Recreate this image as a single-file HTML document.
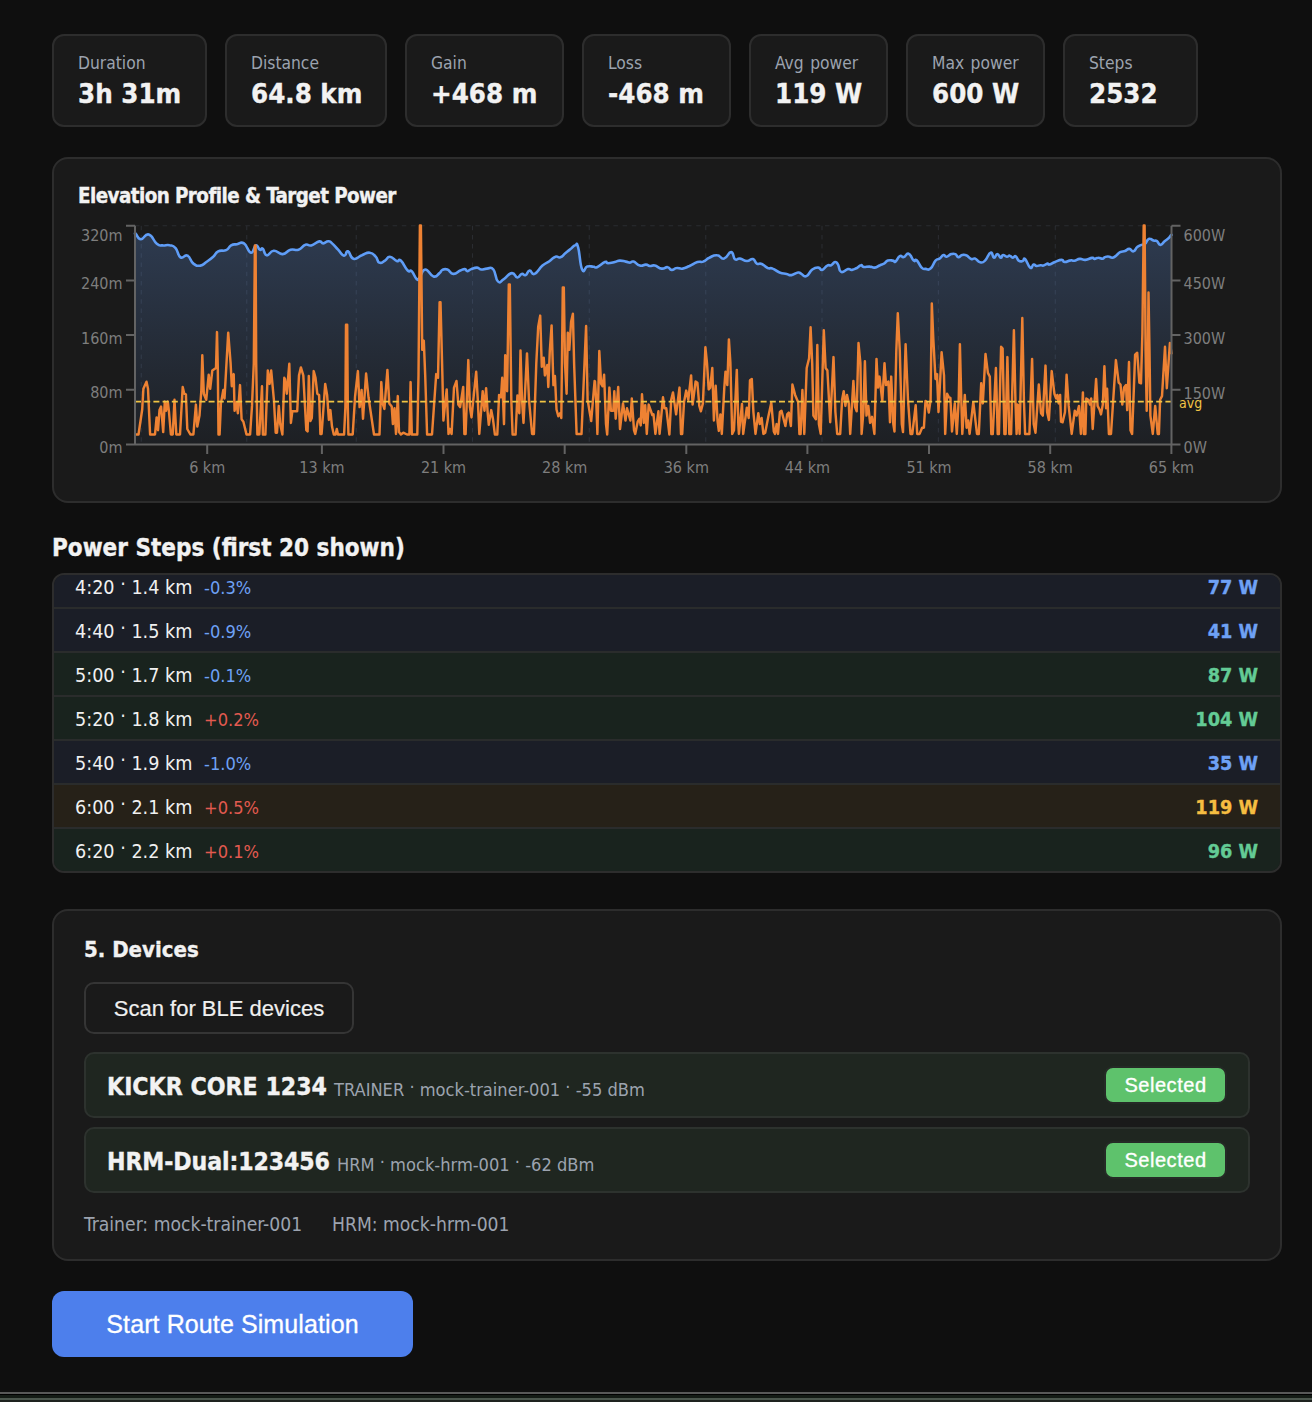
<!DOCTYPE html>
<html lang="en">
<head>
<meta charset="utf-8">
<title>Route Simulation</title>
<style>
*{box-sizing:border-box;margin:0;padding:0}
html,body{width:1312px;height:1402px;overflow:hidden;background:#0f0f0f}
body{position:relative;font-family:"DejaVu Sans Condensed","Liberation Sans",sans-serif;color:#f0f0f0}
.abs{position:absolute}
.card{position:absolute;top:34px;height:93px;background:#1a1a1a;border:2px solid #2d2d2d;border-radius:12px}
.card .l{position:absolute;left:24px;top:17px;font-size:17.3px;word-spacing:1.5px;line-height:20px;color:#9ca3af;white-space:nowrap}
.card .v{position:absolute;left:24px;top:42.3px;font-size:27.4px;line-height:32px;font-weight:bold;color:#f2f2f2;white-space:nowrap}
.panel{position:absolute;left:52px;width:1230px;background:#1a1a1a;border:2px solid #2d2d2d;border-radius:16px}
#chart{top:157px;height:346px}
#chart h3{position:absolute;left:24px;top:25px;font-size:20.4px;letter-spacing:-.57px;line-height:24px;font-weight:bold;color:#f2f2f2;white-space:nowrap}
h2{position:absolute;left:52px;top:533px;font-size:24px;line-height:30px;font-weight:bold;color:#f2f2f2;white-space:nowrap}
#steps{position:absolute;left:52px;top:573px;width:1230px;height:300px;border:2px solid #2d2d2d;border-radius:12px;overflow:hidden;background:#1a1a1a}
.row{position:absolute;left:0;width:1226px;height:44px;border-bottom:2px solid #2a2c2c}
.row .t{position:absolute;left:21px;top:10.5px;font-size:19.6px;line-height:24px;color:#f0f0f0;white-space:nowrap}
.row .g{position:absolute;left:150px;top:11px;font-size:18.1px;line-height:24px;white-space:nowrap}
.row .w{position:absolute;right:22px;top:10.5px;font-size:19.7px;line-height:24px;font-weight:bold;white-space:nowrap}
.row .t i,.drow i{font-style:normal;position:relative;top:-2.5px}
.card .v,h2,h3,.drow b,.row .w{-webkit-text-stroke:.35px currentColor}
.blue{background:#1b1e27}.green{background:#19231e}.amber{background:#262118}
.cb{color:#6ea1f5}.cr{color:#e25a50}.cg{color:#63cb95}.cy{color:#f5bd41}
#dev{top:909px;height:352px}
#dev h3{position:absolute;left:30px;top:25px;font-size:22px;line-height:28px;font-weight:bold;color:#f2f2f2;white-space:nowrap}
#scan{-webkit-text-stroke:.2px #f0f0f0;position:absolute;left:30px;top:71px;width:270px;height:52px;border:2px solid #353535;border-radius:10px;background:#1a1a1a;font-family:"Liberation Sans",sans-serif;font-size:22px;line-height:50px;text-align:center;color:#f0f0f0}
.drow{position:absolute;left:30px;width:1166px;height:66px;border:2px solid #2d322e;border-radius:10px;background:#1f2620}
.drow b{position:absolute;left:21px;top:17.7px;font-size:24.6px;line-height:30px;color:#f2f2f2;white-space:nowrap}
.drow span.m{position:absolute;top:23.5px;font-size:18.1px;line-height:24px;color:#9ca3af;white-space:nowrap}
.badge{position:absolute;right:21px;top:12px;width:123px;height:38px;-webkit-text-stroke:.35px #fff;border:2px solid #252a26;border-radius:9px;background:#5ec26c;font-family:"Liberation Sans",sans-serif;font-size:20px;line-height:35px;text-align:center;color:#fff;letter-spacing:.55px}
.sel{position:absolute;top:302px;font-size:19.15px;line-height:24px;color:#9ca3af;white-space:nowrap}
#start{-webkit-text-stroke:.3px #fff;position:absolute;left:52px;top:1291px;width:361px;height:66px;border-radius:12px;background:#4d7fec;font-family:"Liberation Sans",sans-serif;font-size:25px;line-height:66px;text-align:center;color:#fff;letter-spacing:.1px}
#strip{position:absolute;left:0;top:1392px;width:1312px;height:10px;background:linear-gradient(#585858 0,#585858 2px,#000 2px,#000 3px,#141b15 3px,#141b15 6px,#4b564d 6px,#4b564d 8px,#1e231f 8px)}
</style>
</head>
<body>
<div class="card" style="left:52px;width:155px"><div class="l">Duration</div><div class="v">3h 31m</div></div>
<div class="card" style="left:225px;width:162px"><div class="l">Distance</div><div class="v">64.8 km</div></div>
<div class="card" style="left:405px;width:159px"><div class="l">Gain</div><div class="v">+468 m</div></div>
<div class="card" style="left:582px;width:149px"><div class="l">Loss</div><div class="v">-468 m</div></div>
<div class="card" style="left:749px;width:139px"><div class="l">Avg power</div><div class="v">119 W</div></div>
<div class="card" style="left:906px;width:139px"><div class="l">Max power</div><div class="v">600 W</div></div>
<div class="card" style="left:1063px;width:135px"><div class="l">Steps</div><div class="v">2532</div></div>

<div class="panel" id="chart">
<h3>Elevation Profile &amp; Target Power</h3>

</div>

<svg id="cv" viewBox="0 150 1312 360" width="1312" height="360" style="position:absolute;left:0;top:150px" font-family="'DejaVu Sans Condensed','Liberation Sans',sans-serif" font-size="16">
<defs><linearGradient id="eg" x1="0" y1="225" x2="0" y2="445" gradientUnits="userSpaceOnUse"><stop offset="0" stop-color="#6496e6" stop-opacity="0.27"/><stop offset="1" stop-color="#6496e6" stop-opacity="0.045"/></linearGradient></defs>
<path d="M141.25,225.7 V444.5 M246.75,225.7 V444.5 M356.25,225.7 V444.5 M472.5,225.7 V444.5 M589.25,225.7 V444.5 M705.75,225.7 V444.5 M822,225.7 V444.5 M938.4,225.7 V444.5 M1055.3,225.7 V444.5 M135.0,225.7 H1171.5" stroke="#2a2c31" stroke-width="1.1" stroke-dasharray="4.5 4.7" fill="none"/>
<path d="M135.0,444.5 L135.0,233.6 C135.3,233.7 134.4,232.4 135.9,233.9 C137.5,235.4 137.5,239.1 140.9,239.2 C144.3,239.4 144.6,233.3 148.8,234.5 C153.1,235.7 153.1,240.9 156.8,243.8 C160.5,246.7 159.3,245.0 162.7,245.4 C166.1,245.7 166.2,244.4 169.6,245.2 C173.1,245.9 172.7,244.9 175.6,248.1 C178.5,251.4 177.4,255.2 180.5,257.3 C183.7,259.3 184.0,254.0 187.5,255.7 C190.9,257.4 190.0,261.0 193.4,263.6 C196.9,266.2 196.9,266.0 200.4,265.6 C203.8,265.2 202.9,264.4 206.3,262.0 C209.7,259.6 210.1,259.5 213.2,256.7 C216.4,253.8 214.8,253.1 218.2,251.3 C221.6,249.6 222.7,251.7 226.1,250.1 C229.6,248.5 228.2,247.0 231.1,245.4 C234.0,243.8 233.6,244.7 237.0,244.2 C240.5,243.6 240.3,241.1 244.0,243.4 C247.7,245.7 247.7,252.2 250.9,252.7 C254.1,253.2 253.5,246.2 255.8,245.4 C258.2,244.6 258.0,248.8 259.8,249.7 C261.7,250.6 260.9,247.3 262.8,248.7 C264.6,250.2 263.8,254.7 266.7,255.3 C269.6,255.8 269.5,251.0 273.7,250.7 C277.9,250.4 278.1,254.4 282.6,254.1 C287.1,253.8 286.3,250.9 290.5,249.7 C294.8,248.6 294.5,251.0 298.5,249.7 C302.4,248.4 302.0,245.9 305.4,244.8 C308.8,243.6 307.6,246.3 311.3,245.4 C315.0,244.5 316.1,241.9 319.3,241.4 C322.4,240.9 320.8,243.4 323.2,243.4 C325.6,243.3 325.8,241.2 328.2,241.2 C330.6,241.2 329.5,241.1 332.1,243.4 C334.8,245.7 334.9,246.4 338.1,249.7 C341.3,253.0 341.4,255.2 344.0,255.7 C346.7,256.1 345.5,250.5 348.0,251.3 C350.5,252.2 349.8,257.8 353.5,258.8 C357.2,259.9 357.5,256.9 361.9,255.3 C366.2,253.6 366.1,252.3 369.8,252.7 C373.5,253.1 373.2,254.0 375.7,256.7 C378.3,259.3 376.8,261.6 379.3,262.6 C381.8,263.7 382.1,262.2 385.0,260.6 C387.8,259.0 386.7,256.6 389.9,256.7 C393.1,256.8 393.9,260.0 396.8,261.0 C399.8,262.1 397.9,258.1 400.8,260.6 C403.7,263.2 404.8,267.7 407.7,270.5 C410.7,273.3 409.3,268.9 411.7,271.1 C414.1,273.4 414.5,277.4 416.7,279.1 C418.8,280.7 417.4,280.0 419.6,277.5 C421.9,274.9 421.5,269.8 425.2,269.5 C428.9,269.3 429.7,275.5 433.5,276.5 C437.3,277.4 437.1,274.9 439.5,273.1 C441.8,271.4 440.3,270.9 442.4,269.9 C444.5,269.0 444.5,268.5 447.4,269.5 C450.3,270.6 449.9,273.6 453.3,273.9 C456.8,274.2 457.2,271.8 460.3,270.5 C463.3,269.3 463.0,269.0 464.8,269.1 C466.7,269.3 465.5,271.1 467.2,271.1 C468.9,271.1 468.5,270.1 471.2,269.1 C473.8,268.2 474.5,267.5 477.1,267.6 C479.7,267.7 478.4,269.3 481.1,269.5 C483.7,269.8 483.7,268.6 487.0,268.6 C490.3,268.6 490.5,266.1 493.4,269.5 C496.3,273.0 495.1,278.9 497.9,281.4 C500.7,284.0 500.2,281.3 503.9,279.1 C507.6,276.8 508.2,273.5 511.8,273.1 C515.4,272.7 514.7,277.3 517.3,277.5 C520.0,277.7 519.5,274.5 521.7,273.9 C523.9,273.3 523.5,276.0 525.7,275.1 C527.8,274.2 527.2,270.9 529.6,270.5 C532.0,270.2 531.1,275.2 534.6,273.9 C538.0,272.6 538.5,269.0 542.5,265.6 C546.5,262.2 546.0,263.6 549.4,261.2 C552.9,258.8 552.5,257.7 555.4,256.7 C558.3,255.6 557.7,258.2 560.3,257.3 C563.0,256.4 562.7,255.4 565.3,253.3 C567.9,251.2 567.6,251.5 570.2,249.3 C572.9,247.2 573.1,245.6 575.2,245.2 C577.3,244.7 576.3,241.2 578.2,247.7 C580.0,254.2 579.8,264.5 582.1,269.5 C584.5,274.6 584.2,267.4 587.1,266.6 C590.0,265.8 590.4,266.4 593.0,266.6 C595.7,266.7 593.8,268.4 597.0,267.2 C600.2,266.0 602.0,263.1 604.9,262.0 C607.8,261.0 605.3,263.2 607.9,263.2 C610.5,263.2 611.7,262.7 614.8,262.0 C618.0,261.3 616.9,260.7 619.8,260.6 C622.7,260.5 623.0,261.1 625.7,261.6 C628.5,262.1 627.9,262.6 630.0,262.6 C632.1,262.6 630.9,260.8 633.6,261.6 C636.2,262.4 636.6,264.8 639.9,265.6 C643.2,266.4 643.2,264.5 645.9,264.6 C648.5,264.7 647.4,265.7 649.8,266.0 C652.2,266.2 651.6,264.9 654.8,265.6 C657.9,266.3 658.3,268.1 661.7,268.6 C665.1,269.0 665.0,266.8 667.7,267.2 C670.3,267.5 669.2,269.7 671.6,269.9 C674.0,270.2 673.7,268.3 676.6,268.0 C679.5,267.6 679.1,269.1 682.5,268.6 C686.0,268.0 685.5,267.7 689.5,266.0 C693.4,264.2 693.7,263.2 697.4,262.0 C701.1,260.9 700.2,262.8 703.3,261.6 C706.5,260.5 705.6,259.3 709.3,257.7 C713.0,256.0 713.2,255.0 717.2,255.3 C721.2,255.5 720.4,259.5 724.1,258.6 C727.8,257.8 728.2,251.9 731.1,252.1 C734.0,252.3 732.7,257.5 735.0,259.2 C737.4,261.0 736.8,258.2 740.0,258.6 C743.2,259.1 743.5,260.9 746.9,261.0 C750.4,261.1 750.2,258.4 752.9,259.0 C755.5,259.7 754.5,262.3 756.8,263.6 C759.2,264.9 758.9,262.8 761.8,264.0 C764.7,265.2 764.8,266.7 767.7,268.0 C770.6,269.2 769.5,267.3 772.7,268.6 C775.9,269.8 775.9,271.1 779.6,272.5 C783.3,273.9 783.4,273.2 786.6,273.9 C789.7,274.6 788.4,275.5 791.5,275.1 C794.6,274.7 795.4,272.8 798.1,272.5 C800.7,272.2 799.2,273.0 801.4,273.9 C803.6,274.9 803.5,277.2 806.4,276.1 C809.3,274.9 809.2,271.8 812.3,269.5 C815.5,267.3 815.6,267.5 818.3,267.6 C820.9,267.7 819.9,270.5 822.2,269.9 C824.6,269.4 824.8,266.8 827.2,265.6 C829.6,264.3 829.0,266.1 831.1,265.2 C833.3,264.2 833.3,262.2 835.1,262.0 C837.0,261.9 836.5,261.9 838.1,264.6 C839.7,267.2 838.4,270.7 841.1,271.9 C843.7,273.1 845.1,269.7 848.0,269.1 C850.9,268.6 849.6,270.3 852.0,269.9 C854.3,269.6 854.5,269.2 856.9,268.0 C859.3,266.7 859.0,265.4 860.9,265.2 C862.7,264.9 861.5,266.6 863.8,267.0 C866.2,267.3 866.9,266.4 869.8,266.6 C872.7,266.7 872.0,267.9 874.7,267.6 C877.5,267.2 877.5,266.2 880.0,265.2 C882.5,264.1 881.8,264.8 884.0,263.6 C886.1,262.4 885.5,261.4 887.9,260.6 C890.3,259.8 890.9,260.4 892.9,260.6 C894.9,260.9 893.6,262.8 895.5,261.6 C897.3,260.4 897.6,257.3 899.8,256.1 C902.0,254.9 901.4,257.7 903.8,257.1 C906.2,256.4 906.1,252.7 908.7,253.7 C911.4,254.6 911.6,258.9 913.7,260.6 C915.8,262.4 914.5,258.4 916.7,260.2 C918.8,262.1 919.2,265.2 921.6,267.6 C924.0,269.9 923.2,268.7 925.6,268.9 C928.0,269.2 927.9,270.8 930.5,268.6 C933.2,266.3 933.1,263.3 935.5,260.6 C937.9,258.0 937.3,260.1 939.5,258.6 C941.6,257.2 941.6,255.6 943.4,255.1 C945.3,254.5 944.3,256.9 946.4,256.7 C948.5,256.4 949.0,254.8 951.3,254.1 C953.7,253.4 953.5,253.3 955.3,254.1 C957.2,254.9 956.4,256.8 958.3,257.1 C960.1,257.3 960.1,255.6 962.2,255.1 C964.4,254.6 963.8,254.2 966.2,255.3 C968.6,256.3 968.8,258.1 971.2,259.0 C973.5,259.9 972.7,257.8 975.1,258.6 C977.5,259.5 977.4,261.7 980.1,262.2 C982.7,262.7 982.2,263.2 985.0,260.6 C987.8,258.1 988.2,253.5 990.6,252.7 C993.0,251.9 992.2,257.3 994.0,257.7 C995.7,258.0 995.5,254.1 997.3,254.1 C999.2,254.1 999.4,257.4 1000.9,257.7 C1002.4,257.9 1001.3,255.3 1002.9,255.1 C1004.5,254.8 1005.0,256.5 1006.8,256.7 C1008.7,256.8 1008.2,255.4 1009.8,255.7 C1011.4,255.9 1011.2,257.5 1012.8,257.7 C1014.4,257.8 1014.2,255.5 1015.8,256.3 C1017.3,257.1 1016.9,259.4 1018.7,260.6 C1020.6,261.9 1021.0,261.4 1022.7,261.0 C1024.4,260.6 1023.1,257.3 1025.1,259.0 C1027.1,260.8 1027.9,266.1 1030.2,267.6 C1032.5,269.0 1031.9,265.0 1033.6,264.6 C1035.3,264.2 1034.7,265.8 1036.6,266.0 C1038.4,266.1 1038.7,265.3 1040.5,265.2 C1042.4,265.1 1041.6,266.0 1043.5,265.6 C1045.3,265.2 1045.9,263.9 1047.5,263.6 C1049.0,263.3 1047.5,265.0 1049.4,264.6 C1051.4,264.2 1051.6,263.2 1054.9,262.0 C1058.1,260.7 1059.0,259.9 1061.6,259.9 C1064.2,259.9 1062.2,261.8 1064.6,262.0 C1067.1,262.1 1068.1,260.7 1070.7,260.4 C1073.3,260.0 1072.0,261.1 1074.4,260.7 C1076.8,260.3 1077.0,259.1 1079.9,258.9 C1082.8,258.7 1082.1,260.1 1085.4,259.9 C1088.6,259.6 1089.6,258.2 1092.1,257.9 C1094.5,257.7 1092.9,259.0 1094.5,258.9 C1096.1,258.8 1096.1,257.7 1098.2,257.7 C1100.3,257.6 1100.7,258.8 1102.4,258.7 C1104.2,258.5 1103.3,257.7 1104.9,257.1 C1106.5,256.5 1106.6,256.3 1108.5,256.5 C1110.5,256.6 1110.2,257.8 1112.2,257.7 C1114.1,257.5 1113.7,257.3 1115.9,255.9 C1118.0,254.4 1117.7,253.5 1120.1,252.2 C1122.6,250.9 1122.6,251.9 1125.0,251.0 C1127.4,250.1 1127.0,248.8 1129.3,248.9 C1131.5,249.0 1131.4,251.9 1133.5,251.3 C1135.7,250.8 1135.1,248.7 1137.2,247.0 C1139.3,245.2 1139.3,245.8 1141.5,244.9 C1143.6,244.0 1143.5,245.0 1145.1,243.7 C1146.7,242.4 1146.3,241.3 1147.6,240.0 C1148.9,238.7 1148.4,238.6 1150.0,238.8 C1151.6,238.9 1151.9,240.1 1153.7,240.6 C1155.4,241.2 1154.9,239.7 1156.7,240.9 C1158.5,242.0 1158.3,244.8 1160.4,244.9 C1162.5,245.0 1162.4,243.1 1164.6,241.2 C1166.9,239.4 1167.2,239.6 1168.9,237.9 C1170.6,236.3 1170.3,235.9 1171.0,235.1 C1171.7,234.3 1171.4,235.0 1171.5,235.0 L1171.5,444.5 Z" fill="url(#eg)"/>
<path d="M135.0,233.6 C135.3,233.7 134.4,232.4 135.9,233.9 C137.5,235.4 137.5,239.1 140.9,239.2 C144.3,239.4 144.6,233.3 148.8,234.5 C153.1,235.7 153.1,240.9 156.8,243.8 C160.5,246.7 159.3,245.0 162.7,245.4 C166.1,245.7 166.2,244.4 169.6,245.2 C173.1,245.9 172.7,244.9 175.6,248.1 C178.5,251.4 177.4,255.2 180.5,257.3 C183.7,259.3 184.0,254.0 187.5,255.7 C190.9,257.4 190.0,261.0 193.4,263.6 C196.9,266.2 196.9,266.0 200.4,265.6 C203.8,265.2 202.9,264.4 206.3,262.0 C209.7,259.6 210.1,259.5 213.2,256.7 C216.4,253.8 214.8,253.1 218.2,251.3 C221.6,249.6 222.7,251.7 226.1,250.1 C229.6,248.5 228.2,247.0 231.1,245.4 C234.0,243.8 233.6,244.7 237.0,244.2 C240.5,243.6 240.3,241.1 244.0,243.4 C247.7,245.7 247.7,252.2 250.9,252.7 C254.1,253.2 253.5,246.2 255.8,245.4 C258.2,244.6 258.0,248.8 259.8,249.7 C261.7,250.6 260.9,247.3 262.8,248.7 C264.6,250.2 263.8,254.7 266.7,255.3 C269.6,255.8 269.5,251.0 273.7,250.7 C277.9,250.4 278.1,254.4 282.6,254.1 C287.1,253.8 286.3,250.9 290.5,249.7 C294.8,248.6 294.5,251.0 298.5,249.7 C302.4,248.4 302.0,245.9 305.4,244.8 C308.8,243.6 307.6,246.3 311.3,245.4 C315.0,244.5 316.1,241.9 319.3,241.4 C322.4,240.9 320.8,243.4 323.2,243.4 C325.6,243.3 325.8,241.2 328.2,241.2 C330.6,241.2 329.5,241.1 332.1,243.4 C334.8,245.7 334.9,246.4 338.1,249.7 C341.3,253.0 341.4,255.2 344.0,255.7 C346.7,256.1 345.5,250.5 348.0,251.3 C350.5,252.2 349.8,257.8 353.5,258.8 C357.2,259.9 357.5,256.9 361.9,255.3 C366.2,253.6 366.1,252.3 369.8,252.7 C373.5,253.1 373.2,254.0 375.7,256.7 C378.3,259.3 376.8,261.6 379.3,262.6 C381.8,263.7 382.1,262.2 385.0,260.6 C387.8,259.0 386.7,256.6 389.9,256.7 C393.1,256.8 393.9,260.0 396.8,261.0 C399.8,262.1 397.9,258.1 400.8,260.6 C403.7,263.2 404.8,267.7 407.7,270.5 C410.7,273.3 409.3,268.9 411.7,271.1 C414.1,273.4 414.5,277.4 416.7,279.1 C418.8,280.7 417.4,280.0 419.6,277.5 C421.9,274.9 421.5,269.8 425.2,269.5 C428.9,269.3 429.7,275.5 433.5,276.5 C437.3,277.4 437.1,274.9 439.5,273.1 C441.8,271.4 440.3,270.9 442.4,269.9 C444.5,269.0 444.5,268.5 447.4,269.5 C450.3,270.6 449.9,273.6 453.3,273.9 C456.8,274.2 457.2,271.8 460.3,270.5 C463.3,269.3 463.0,269.0 464.8,269.1 C466.7,269.3 465.5,271.1 467.2,271.1 C468.9,271.1 468.5,270.1 471.2,269.1 C473.8,268.2 474.5,267.5 477.1,267.6 C479.7,267.7 478.4,269.3 481.1,269.5 C483.7,269.8 483.7,268.6 487.0,268.6 C490.3,268.6 490.5,266.1 493.4,269.5 C496.3,273.0 495.1,278.9 497.9,281.4 C500.7,284.0 500.2,281.3 503.9,279.1 C507.6,276.8 508.2,273.5 511.8,273.1 C515.4,272.7 514.7,277.3 517.3,277.5 C520.0,277.7 519.5,274.5 521.7,273.9 C523.9,273.3 523.5,276.0 525.7,275.1 C527.8,274.2 527.2,270.9 529.6,270.5 C532.0,270.2 531.1,275.2 534.6,273.9 C538.0,272.6 538.5,269.0 542.5,265.6 C546.5,262.2 546.0,263.6 549.4,261.2 C552.9,258.8 552.5,257.7 555.4,256.7 C558.3,255.6 557.7,258.2 560.3,257.3 C563.0,256.4 562.7,255.4 565.3,253.3 C567.9,251.2 567.6,251.5 570.2,249.3 C572.9,247.2 573.1,245.6 575.2,245.2 C577.3,244.7 576.3,241.2 578.2,247.7 C580.0,254.2 579.8,264.5 582.1,269.5 C584.5,274.6 584.2,267.4 587.1,266.6 C590.0,265.8 590.4,266.4 593.0,266.6 C595.7,266.7 593.8,268.4 597.0,267.2 C600.2,266.0 602.0,263.1 604.9,262.0 C607.8,261.0 605.3,263.2 607.9,263.2 C610.5,263.2 611.7,262.7 614.8,262.0 C618.0,261.3 616.9,260.7 619.8,260.6 C622.7,260.5 623.0,261.1 625.7,261.6 C628.5,262.1 627.9,262.6 630.0,262.6 C632.1,262.6 630.9,260.8 633.6,261.6 C636.2,262.4 636.6,264.8 639.9,265.6 C643.2,266.4 643.2,264.5 645.9,264.6 C648.5,264.7 647.4,265.7 649.8,266.0 C652.2,266.2 651.6,264.9 654.8,265.6 C657.9,266.3 658.3,268.1 661.7,268.6 C665.1,269.0 665.0,266.8 667.7,267.2 C670.3,267.5 669.2,269.7 671.6,269.9 C674.0,270.2 673.7,268.3 676.6,268.0 C679.5,267.6 679.1,269.1 682.5,268.6 C686.0,268.0 685.5,267.7 689.5,266.0 C693.4,264.2 693.7,263.2 697.4,262.0 C701.1,260.9 700.2,262.8 703.3,261.6 C706.5,260.5 705.6,259.3 709.3,257.7 C713.0,256.0 713.2,255.0 717.2,255.3 C721.2,255.5 720.4,259.5 724.1,258.6 C727.8,257.8 728.2,251.9 731.1,252.1 C734.0,252.3 732.7,257.5 735.0,259.2 C737.4,261.0 736.8,258.2 740.0,258.6 C743.2,259.1 743.5,260.9 746.9,261.0 C750.4,261.1 750.2,258.4 752.9,259.0 C755.5,259.7 754.5,262.3 756.8,263.6 C759.2,264.9 758.9,262.8 761.8,264.0 C764.7,265.2 764.8,266.7 767.7,268.0 C770.6,269.2 769.5,267.3 772.7,268.6 C775.9,269.8 775.9,271.1 779.6,272.5 C783.3,273.9 783.4,273.2 786.6,273.9 C789.7,274.6 788.4,275.5 791.5,275.1 C794.6,274.7 795.4,272.8 798.1,272.5 C800.7,272.2 799.2,273.0 801.4,273.9 C803.6,274.9 803.5,277.2 806.4,276.1 C809.3,274.9 809.2,271.8 812.3,269.5 C815.5,267.3 815.6,267.5 818.3,267.6 C820.9,267.7 819.9,270.5 822.2,269.9 C824.6,269.4 824.8,266.8 827.2,265.6 C829.6,264.3 829.0,266.1 831.1,265.2 C833.3,264.2 833.3,262.2 835.1,262.0 C837.0,261.9 836.5,261.9 838.1,264.6 C839.7,267.2 838.4,270.7 841.1,271.9 C843.7,273.1 845.1,269.7 848.0,269.1 C850.9,268.6 849.6,270.3 852.0,269.9 C854.3,269.6 854.5,269.2 856.9,268.0 C859.3,266.7 859.0,265.4 860.9,265.2 C862.7,264.9 861.5,266.6 863.8,267.0 C866.2,267.3 866.9,266.4 869.8,266.6 C872.7,266.7 872.0,267.9 874.7,267.6 C877.5,267.2 877.5,266.2 880.0,265.2 C882.5,264.1 881.8,264.8 884.0,263.6 C886.1,262.4 885.5,261.4 887.9,260.6 C890.3,259.8 890.9,260.4 892.9,260.6 C894.9,260.9 893.6,262.8 895.5,261.6 C897.3,260.4 897.6,257.3 899.8,256.1 C902.0,254.9 901.4,257.7 903.8,257.1 C906.2,256.4 906.1,252.7 908.7,253.7 C911.4,254.6 911.6,258.9 913.7,260.6 C915.8,262.4 914.5,258.4 916.7,260.2 C918.8,262.1 919.2,265.2 921.6,267.6 C924.0,269.9 923.2,268.7 925.6,268.9 C928.0,269.2 927.9,270.8 930.5,268.6 C933.2,266.3 933.1,263.3 935.5,260.6 C937.9,258.0 937.3,260.1 939.5,258.6 C941.6,257.2 941.6,255.6 943.4,255.1 C945.3,254.5 944.3,256.9 946.4,256.7 C948.5,256.4 949.0,254.8 951.3,254.1 C953.7,253.4 953.5,253.3 955.3,254.1 C957.2,254.9 956.4,256.8 958.3,257.1 C960.1,257.3 960.1,255.6 962.2,255.1 C964.4,254.6 963.8,254.2 966.2,255.3 C968.6,256.3 968.8,258.1 971.2,259.0 C973.5,259.9 972.7,257.8 975.1,258.6 C977.5,259.5 977.4,261.7 980.1,262.2 C982.7,262.7 982.2,263.2 985.0,260.6 C987.8,258.1 988.2,253.5 990.6,252.7 C993.0,251.9 992.2,257.3 994.0,257.7 C995.7,258.0 995.5,254.1 997.3,254.1 C999.2,254.1 999.4,257.4 1000.9,257.7 C1002.4,257.9 1001.3,255.3 1002.9,255.1 C1004.5,254.8 1005.0,256.5 1006.8,256.7 C1008.7,256.8 1008.2,255.4 1009.8,255.7 C1011.4,255.9 1011.2,257.5 1012.8,257.7 C1014.4,257.8 1014.2,255.5 1015.8,256.3 C1017.3,257.1 1016.9,259.4 1018.7,260.6 C1020.6,261.9 1021.0,261.4 1022.7,261.0 C1024.4,260.6 1023.1,257.3 1025.1,259.0 C1027.1,260.8 1027.9,266.1 1030.2,267.6 C1032.5,269.0 1031.9,265.0 1033.6,264.6 C1035.3,264.2 1034.7,265.8 1036.6,266.0 C1038.4,266.1 1038.7,265.3 1040.5,265.2 C1042.4,265.1 1041.6,266.0 1043.5,265.6 C1045.3,265.2 1045.9,263.9 1047.5,263.6 C1049.0,263.3 1047.5,265.0 1049.4,264.6 C1051.4,264.2 1051.6,263.2 1054.9,262.0 C1058.1,260.7 1059.0,259.9 1061.6,259.9 C1064.2,259.9 1062.2,261.8 1064.6,262.0 C1067.1,262.1 1068.1,260.7 1070.7,260.4 C1073.3,260.0 1072.0,261.1 1074.4,260.7 C1076.8,260.3 1077.0,259.1 1079.9,258.9 C1082.8,258.7 1082.1,260.1 1085.4,259.9 C1088.6,259.6 1089.6,258.2 1092.1,257.9 C1094.5,257.7 1092.9,259.0 1094.5,258.9 C1096.1,258.8 1096.1,257.7 1098.2,257.7 C1100.3,257.6 1100.7,258.8 1102.4,258.7 C1104.2,258.5 1103.3,257.7 1104.9,257.1 C1106.5,256.5 1106.6,256.3 1108.5,256.5 C1110.5,256.6 1110.2,257.8 1112.2,257.7 C1114.1,257.5 1113.7,257.3 1115.9,255.9 C1118.0,254.4 1117.7,253.5 1120.1,252.2 C1122.6,250.9 1122.6,251.9 1125.0,251.0 C1127.4,250.1 1127.0,248.8 1129.3,248.9 C1131.5,249.0 1131.4,251.9 1133.5,251.3 C1135.7,250.8 1135.1,248.7 1137.2,247.0 C1139.3,245.2 1139.3,245.8 1141.5,244.9 C1143.6,244.0 1143.5,245.0 1145.1,243.7 C1146.7,242.4 1146.3,241.3 1147.6,240.0 C1148.9,238.7 1148.4,238.6 1150.0,238.8 C1151.6,238.9 1151.9,240.1 1153.7,240.6 C1155.4,241.2 1154.9,239.7 1156.7,240.9 C1158.5,242.0 1158.3,244.8 1160.4,244.9 C1162.5,245.0 1162.4,243.1 1164.6,241.2 C1166.9,239.4 1167.2,239.6 1168.9,237.9 C1170.6,236.3 1170.3,235.9 1171.0,235.1 C1171.7,234.3 1171.4,235.0 1171.5,235.0" fill="none" stroke="#5f9df7" stroke-width="2.6" stroke-linejoin="round" stroke-linecap="round"/>
<polyline points="136.1,434.5 138.5,434.5 142.2,409.5 143.4,388.8 146.5,381.7 148.0,388.8 150.1,434.5 155.0,434.5 156.6,417.4 158.0,430.2 159.5,410.1 161.1,406.5 163.2,432.1 164.8,401.6 166.0,410.7 167.8,401.6 169.0,412.0 170.9,434.5 172.7,434.5 174.5,399.8 176.3,434.5 180.0,434.5 182.7,387.0 184.3,393.7 185.9,394.3 187.3,429.0 190.4,434.5 193.4,434.5 195.9,404.6 197.3,426.6 199.5,415.6 201.3,391.2 202.3,355.2 203.8,393.7 206.2,399.8 208.7,374.8 210.2,388.8 212.3,370.5 216.0,368.0 217.0,332.1 217.8,368.0 218.5,434.5 219.6,434.5 220.9,403.4 223.3,390.0 224.5,398.5 228.2,332.7 230.6,363.2 231.8,386.3 233.7,374.1 234.6,410.7 236.3,402.2 237.9,413.2 240.0,385.1 241.6,419.3 243.4,421.7 246.5,434.5 250.1,434.5 252.0,405.9 253.8,363.2 254.9,245.5 255.6,245.5 256.2,363.2 257.4,434.5 259.3,434.5 262.0,386.3 262.9,434.5 265.4,434.5 267.8,370.5 269.6,383.9 271.2,370.5 273.9,399.8 275.7,432.7 277.0,432.7 278.8,405.9 280.2,424.1 282.4,434.5 284.3,377.8 285.0,379.0 286.8,393.7 289.3,363.8 290.9,422.9 292.3,411.3 297.2,411.3 299.0,375.4 300.9,367.4 303.3,375.4 306.3,430.2 307.6,431.5 308.8,376.0 310.4,421.1 311.8,418.0 313.7,371.1 315.5,377.8 317.3,393.7 319.1,394.9 320.4,433.9 321.6,433.9 325.2,383.9 327.1,394.9 328.9,419.9 330.4,410.1 332.0,426.6 333.8,434.5 335.6,434.5 336.8,429.0 338.0,434.5 344.1,434.5 345.4,407.1 346.0,324.8 347.2,324.8 347.8,407.1 348.4,434.5 352.7,434.5 355.1,396.1 357.9,371.1 359.6,407.1 361.6,390.0 363.0,418.7 366.1,373.5 368.5,397.3 374.0,434.5 379.5,434.5 381.3,382.1 382.6,403.4 384.4,408.9 387.4,369.9 389.3,403.4 391.7,406.5 392.9,424.1 394.5,408.3 396.0,433.9 397.8,396.1 399.0,432.1 400.9,434.5 403.3,432.7 407.0,434.5 409.4,434.5 410.6,382.1 411.8,434.5 417.3,434.5 418.5,375.4 419.9,225.5 420.9,225.5 422.2,349.8 423.8,340.6 425.2,375.4 427.1,434.5 432.0,434.5 436.2,374.1 438.0,377.8 439.6,302.2 440.5,302.2 442.4,375.4 443.4,420.5 446.7,389.4 448.5,433.9 449.8,429.0 451.6,433.9 454.0,387.6 456.5,380.9 458.3,404.6 460.1,407.1 463.2,387.0 464.4,433.9 465.6,433.9 468.3,360.1 469.9,407.1 471.5,417.4 476.2,371.7 477.8,399.8 479.3,433.9 482.7,391.2 484.5,410.7 486.1,388.2 487.6,412.0 488.8,424.8 491.2,410.1 493.0,419.3 494.9,434.5 497.3,434.5 499.1,394.9 501.0,397.3 502.2,377.8 504.0,424.1 505.2,355.2 507.1,391.2 508.8,284.4 509.8,284.4 511.3,399.8 512.6,434.5 515.6,434.5 517.4,395.5 519.3,413.2 520.5,350.4 522.0,399.8 523.5,422.9 527.0,353.4 529.0,399.8 532.1,433.9 533.9,433.9 536.3,363.2 538.2,326.6 540.2,315.6 541.8,366.8 543.7,357.7 544.9,375.4 547.3,365.0 548.3,387.0 549.8,351.0 551.6,325.4 553.4,385.1 554.9,376.0 556.5,409.5 558.3,416.2 560.1,413.2 561.3,418.0 562.8,287.4 563.8,287.4 565.0,363.2 566.6,393.7 567.8,332.7 569.3,349.8 571.1,321.7 572.9,313.8 574.1,363.2 576.6,433.9 581.5,433.9 584.5,363.2 586.1,326.0 587.6,399.8 591.2,421.1 594.6,380.9 595.0,381.5 596.2,399.8 597.4,433.9 599.3,351.0 601.1,383.9 602.6,386.3 604.1,374.8 606.0,424.1 607.2,434.5 609.4,387.6 610.9,410.7 613.3,410.7 614.3,391.2 615.7,418.7 618.2,387.0 620.0,429.0 623.0,403.4 625.5,420.5 627.0,408.3 630.4,420.5 631.8,398.5 634.0,430.2 635.2,433.9 637.7,421.7 639.5,418.7 640.7,425.4 642.0,394.3 643.8,422.9 645.2,405.2 646.8,433.9 648.7,404.6 652.3,415.0 653.5,414.4 655.4,433.9 658.4,411.3 659.6,433.9 663.0,397.3 664.5,408.3 666.3,408.3 669.4,434.5 671.2,399.8 673.0,392.4 676.1,414.4 679.5,387.6 681.0,433.9 682.2,433.9 684.0,402.2 686.2,390.6 688.3,399.8 691.1,375.4 692.6,404.6 695.6,381.5 697.4,382.7 699.3,405.9 700.9,411.3 702.9,403.4 705.4,347.3 707.0,363.2 708.7,389.4 710.2,387.6 712.3,368.0 713.9,420.5 715.7,385.7 717.6,421.7 718.8,430.9 720.4,414.4 721.8,433.9 724.3,387.6 725.5,371.7 727.3,385.1 728.9,339.4 730.4,363.2 732.2,433.9 734.0,430.2 736.8,369.9 738.3,424.1 738.9,433.9 742.0,404.0 743.2,433.9 746.8,407.7 748.7,418.0 750.0,380.2 751.8,379.0 753.4,412.0 755.5,433.9 758.3,413.2 759.8,424.1 761.6,418.0 763.4,433.9 765.2,432.7 768.3,416.8 771.3,402.8 773.8,431.5 775.0,433.9 776.6,424.1 778.0,433.9 779.9,412.0 781.5,410.7 785.4,426.0 787.2,414.4 788.8,412.6 790.9,426.0 792.4,384.5 795.1,394.9 798.2,402.2 799.4,433.9 800.6,433.9 802.4,390.0 804.3,433.9 806.7,368.0 809.1,358.3 810.6,327.2 812.2,363.2 813.4,415.6 815.9,419.3 817.3,344.9 818.9,424.1 820.7,433.9 823.8,330.2 825.6,368.0 827.4,370.5 830.2,422.3 833.5,357.1 835.4,412.0 837.2,433.9 840.2,433.9 842.1,399.8 843.7,391.2 845.4,405.9 847.0,394.9 848.8,403.4 850.2,433.9 853.4,380.9 855.1,407.1 856.7,411.3 858.5,343.0 860.4,363.2 861.6,433.9 863.4,412.0 864.9,361.3 866.5,415.6 868.3,405.9 870.1,422.9 872.0,416.8 874.4,433.9 876.5,358.9 878.0,387.6 879.5,376.6 882.3,401.0 884.5,363.2 886.0,385.1 888.4,381.5 890.0,422.3 891.2,376.6 893.3,424.1 894.5,431.5 896.3,351.0 897.8,313.2 899.8,351.0 901.8,424.1 903.0,432.1 905.6,344.3 908.0,399.8 910.5,433.9 912.3,433.9 915.7,405.2 917.2,433.9 919.6,433.9 922.1,427.8 923.9,427.8 925.5,401.0 927.0,402.2 928.8,412.6 930.6,399.8 931.8,303.4 933.3,338.8 935.5,379.0 937.0,374.1 938.5,412.0 941.6,352.2 944.0,375.4 945.2,433.9 947.1,393.7 948.9,397.3 950.4,397.9 952.0,431.5 954.8,403.4 956.8,433.9 958.7,399.8 959.9,344.3 961.3,399.8 962.3,433.9 964.8,394.9 966.6,427.8 968.2,420.5 969.6,433.9 973.3,402.2 977.0,433.9 978.8,433.9 981.2,383.3 982.8,403.4 985.5,354.0 987.9,372.9 989.8,376.6 991.3,433.9 992.8,433.9 995.9,368.0 997.7,433.9 998.9,433.9 1001.1,346.7 1002.6,348.5 1004.4,433.9 1005.6,433.9 1007.4,357.1 1009.3,433.9 1011.1,433.9 1013.9,330.2 1015.4,399.8 1016.6,433.9 1017.8,404.6 1019.6,433.9 1022.3,318.0 1023.9,399.8 1025.1,433.9 1029.4,433.9 1032.1,358.9 1033.7,424.1 1035.5,432.7 1038.8,384.5 1041.0,413.2 1042.8,415.6 1045.5,365.6 1047.1,412.0 1048.9,419.9 1051.7,371.1 1054.4,393.7 1056.2,398.5 1057.4,394.9 1058.7,403.4 1060.1,394.9 1061.0,421.7 1062.6,422.3 1065.0,412.0 1066.6,374.8 1068.7,405.9 1071.7,433.9 1074.8,410.7 1076.6,415.6 1079.0,405.9 1080.9,433.9 1082.9,392.4 1083.9,433.9 1085.4,433.9 1086.3,398.5 1088.2,399.8 1090.0,404.6 1091.2,398.5 1092.7,429.0 1096.1,379.0 1097.6,405.9 1099.5,409.5 1101.0,414.4 1102.8,404.6 1104.4,366.2 1106.1,408.3 1107.1,388.8 1108.9,433.9 1111.0,433.9 1113.8,391.2 1115.9,360.1 1118.7,382.7 1120.5,384.5 1122.3,404.6 1124.1,387.6 1126.0,385.1 1127.2,410.1 1129.0,362.0 1130.5,430.2 1132.1,433.9 1133.9,387.6 1135.1,354.6 1137.2,352.8 1139.4,382.7 1141.0,383.3 1142.4,332.7 1143.7,225.5 1144.6,225.5 1145.6,351.0 1146.7,410.7 1147.9,351.0 1148.5,292.4 1149.5,351.0 1150.4,415.6 1152.8,433.9 1155.2,405.9 1157.7,433.9 1158.9,433.9 1160.1,399.8 1162.0,396.1 1165.0,346.7 1166.8,388.2 1169.9,343.0 1171.5,353.4" fill="none" stroke="#ee8233" stroke-width="2.45" stroke-linejoin="round" stroke-linecap="round"/>
<path d="M135.0,401.6 H1171.5" stroke="#f0c443" stroke-width="1.7" stroke-dasharray="6 3.2" fill="none"/>
<path d="M135.0,225.7 V444.5 M1171.5,225.7 V444.5 M134.0,444.5 H1172.5 M126.0,444.5 H135.0 M1171.5,444.5 H1180.5 M126.0,389.8 H135.0 M1171.5,389.8 H1180.5 M126.0,335.1 H135.0 M1171.5,335.1 H1180.5 M126.0,280.4 H135.0 M1171.5,280.4 H1180.5 M126.0,225.7 H135.0 M1171.5,225.7 H1180.5 M207.2,444.5 V454.0 M321.9,444.5 V454.0 M443.5,444.5 V454.0 M564.7,444.5 V454.0 M686.3,444.5 V454.0 M807.4,444.5 V454.0 M929,444.5 V454.0 M1050.2,444.5 V454.0 M1171.4,444.5 V454.0" stroke="#636363" stroke-width="2" fill="none"/>
<g fill="#7e7e7e">
<text x="122.5" y="453.0" text-anchor="end">0m</text>
<text x="122.5" y="398.3" text-anchor="end">80m</text>
<text x="122.5" y="343.6" text-anchor="end">160m</text>
<text x="122.5" y="288.9" text-anchor="end">240m</text>
<text x="122.5" y="241.2" text-anchor="end">320m</text>
<text x="1183.5" y="452.5">0W</text>
<text x="1183.5" y="398.8">150W</text>
<text x="1183.5" y="344.1">300W</text>
<text x="1183.5" y="289.4">450W</text>
<text x="1183.5" y="240.7">600W</text>
<text x="207.2" y="472.5" text-anchor="middle">6 km</text>
<text x="321.9" y="472.5" text-anchor="middle">13 km</text>
<text x="443.5" y="472.5" text-anchor="middle">21 km</text>
<text x="564.7" y="472.5" text-anchor="middle">28 km</text>
<text x="686.3" y="472.5" text-anchor="middle">36 km</text>
<text x="807.4" y="472.5" text-anchor="middle">44 km</text>
<text x="929" y="472.5" text-anchor="middle">51 km</text>
<text x="1050.2" y="472.5" text-anchor="middle">58 km</text>
<text x="1171.4" y="472.5" text-anchor="middle">65 km</text>
</g>
<text x="1179" y="408" font-size="14" fill="#f3c545">avg</text>
</svg>

<h2>Power Steps (first 20 shown)</h2>
<div id="steps">
<div class="row blue" style="top:-10px"><div class="t">4:20 <i>·</i> 1.4 km</div><div class="g cb">-0.3%</div><div class="w cb">77 W</div></div>
<div class="row blue" style="top:34px"><div class="t">4:40 <i>·</i> 1.5 km</div><div class="g cb">-0.9%</div><div class="w cb">41 W</div></div>
<div class="row green" style="top:78px"><div class="t">5:00 <i>·</i> 1.7 km</div><div class="g cb">-0.1%</div><div class="w cg">87 W</div></div>
<div class="row green" style="top:122px"><div class="t">5:20 <i>·</i> 1.8 km</div><div class="g cr">+0.2%</div><div class="w cg">104 W</div></div>
<div class="row blue" style="top:166px"><div class="t">5:40 <i>·</i> 1.9 km</div><div class="g cb">-1.0%</div><div class="w cb">35 W</div></div>
<div class="row amber" style="top:210px"><div class="t">6:00 <i>·</i> 2.1 km</div><div class="g cr">+0.5%</div><div class="w cy">119 W</div></div>
<div class="row green" style="top:254px;border-bottom:none"><div class="t">6:20 <i>·</i> 2.2 km</div><div class="g cr">+0.1%</div><div class="w cg">96 W</div></div>
</div>

<div class="panel" id="dev">
<h3>5. Devices</h3>
<div id="scan">Scan for BLE devices</div>
<div class="drow" style="top:141px"><b>KICKR CORE 1234</b><span class="m" style="left:248px">TRAINER <i>·</i> mock-trainer-001 <i>·</i> -55 dBm</span><div class="badge">Selected</div></div>
<div class="drow" style="top:216px"><b style="letter-spacing:-.12px">HRM-Dual:123456</b><span class="m" style="left:251px">HRM <i>·</i> mock-hrm-001 <i>·</i> -62 dBm</span><div class="badge">Selected</div></div>
<div class="sel" style="left:30px">Trainer: mock-trainer-001</div>
<div class="sel" style="left:278px">HRM: mock-hrm-001</div>
</div>

<div id="start">Start Route Simulation</div>
<div id="strip"></div>
</body>
</html>
